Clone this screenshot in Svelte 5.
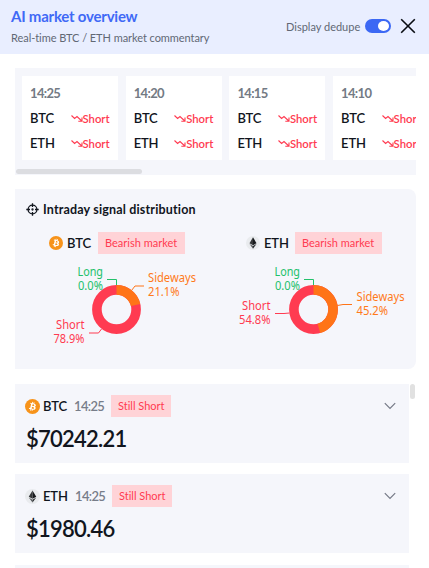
<script>
  const times = ['14:25', '14:20', '14:15', '14:10'];
  const coins = ['BTC', 'ETH'];
  const charts = [
    {
      coin: 'BTC', cx: 101.5, side: 21.1,
      lines: { long: '92,18.5 101.5,18.5 101.5,24', side: '116.5,29.5 120,25 129,25', short: '74,72 83.5,72 86.5,68' },
      labels: [
        { t: 'Long', v: '0.0%', x: 88, y: 14.5, w: 25.5, vw: 25, a: 'end', c: '#23c16b' },
        { t: 'Sideways', v: '21.1%', x: 133, y: 21, w: 48, vw: 31.5, a: 'start', c: '#ff7a1a' },
        { t: 'Short', v: '78.9%', x: 69.5, y: 67.5, w: 28.5, vw: 31, a: 'end', c: '#ff3b51' }
      ]
    },
    {
      coin: 'ETH', cx: 298.5, side: 45.2,
      lines: { long: '289,18.5 298.5,18.5 298.5,24', side: '322.5,44.5 328,43.5 337,43.5', short: '260,52.5 269,52.5 274.5,52' },
      labels: [
        { t: 'Long', v: '0.0%', x: 285, y: 14.5, w: 25.5, vw: 25, a: 'end', c: '#23c16b' },
        { t: 'Sideways', v: '45.2%', x: 341.5, y: 40, w: 48, vw: 31.5, a: 'start', c: '#ff7a1a' },
        { t: 'Short', v: '54.8%', x: 255.5, y: 49, w: 28.5, vw: 31.5, a: 'end', c: '#ff3b51' }
      ]
    }
  ];
  const R = 19.6;
  const C = 2 * Math.PI * R;
</script>

{#snippet coinIcon(name)}
  <svg class="coin" viewBox="0 0 32 32">
    {#if name === 'BTC'}
      <circle cx="16" cy="16" r="16" fill="#f7931a" />
      <path fill="#fff" d="M23.2 14c.3-2.1-1.300-3.200-3.500-4l.7-2.800-1.700-.4-.7 2.700-1.400-.3.700-2.800-1.700-.4-.7 2.800-3.500-.9-.5 1.900 1.300.3c.7.2.8.6.8 1l-1.900 7.600c-.1.200-.3.500-.8.400l-1.300-.3-.9 2 3.500.9-.7 2.800 1.700.4.700-2.800 1.400.4-.7 2.700 1.700.4.700-2.800c2.900.6 5.200.3 6.100-2.300.8-2.100 0-3.400-1.500-4.200 1.100-.2 1.900-1 2.200-2.300zm-3.900 5.500c-.5 2.100-4.100 1-5.200.7l.9-3.800c1.200.3 4.900.9 4.300 3.100zm.5-5.500c-.5 1.900-3.400.9-4.400.7l.9-3.400c1 .2 4 .7 3.500 2.700z" />
    {:else}
      <circle cx="16" cy="16" r="16" fill="#e9ebee" />
      <path fill="#343638" d="M16 3 8 16.300 16 21z" />
      <path fill="#17191c" d="M16 3v18l8-4.700z" />
      <path fill="#55585c" d="M8 18l8 11v-6.300z" />
      <path fill="#25282b" d="M16 22.700V29l8-11z" />
    {/if}
  </svg>
{/snippet}

<main>
  <header>
    <div>
      <h1>AI market overview</h1>
      <p>Real-time BTC / ETH market commentary</p>
    </div>
    <div class="actions">
      <span class="dedupe">Display dedupe</span>
      <span class="switch"><i></i></span>
      <svg class="close" viewBox="0 0 16 16"><path d="M1.200 1.200 14.800 14.800M14.800 1.200 1.200 14.800" /></svg>
    </div>
  </header>

  <section class="strip">
    <div class="row">
      {#each times as time}
        <article>
          <div class="time">{time}</div>
          {#each coins as coin}
            <div class="signal">
              <b class={coin.toLowerCase()}>{coin}</b>
              <span>
                <svg viewBox="0 0 12 10"><path d="M.5 2.500 3.600 5.500 6 3.500 10.800 8M11 4.500V8.300H7.300" /></svg><em>Short</em>
              </span>
            </div>
          {/each}
        </article>
      {/each}
    </div>
    <div class="thumb"></div>
  </section>

  <section class="dist">
    <h2>
      <svg viewBox="0 0 13 13"><circle cx="6.500" cy="6.500" r="4.400" /><path d="M6.500.3v3.700M6.500 9v3.700M.3 6.500H4M9 6.500h3.700" /><circle cx="6.500" cy="6.500" r=".5" /></svg>
      <span>Intraday signal distribution</span>
    </h2>
    <div class="heads">
      {#each coins as coin}
        <div class="head">
          {@render coinIcon(coin)}<b class={coin.toLowerCase()}>{coin}</b><span class="tag market">Bearish market</span>
        </div>
      {/each}
    </div>
    <svg class="plot" viewBox="0 0 401 110">
      {#each charts as c}
        <g fill="none" stroke-width="9.600" transform="rotate(-90 {c.cx} 48.500)">
          <circle cx={c.cx} cy="48.500" r={R} stroke="#ff3b51" />
          <circle cx={c.cx} cy="48.500" r={R} stroke="#ff7417" stroke-dasharray="{C * c.side / 100} {C}" />
        </g>
        <g fill="none" stroke-width="1">
          <polyline points={c.lines.long} stroke="#23c16b" />
          <polyline points={c.lines.side} stroke="#ff7417" />
          <polyline points={c.lines.short} stroke="#ff3b51" />
        </g>
        {#each c.labels as l}
          <text x={l.x} y={l.y} text-anchor={l.a} fill={l.c} textLength={l.w} lengthAdjust="spacingAndGlyphs">{l.t}</text>
          <text x={l.x} y={l.y + 14} text-anchor={l.a} fill={l.c} textLength={l.vw} lengthAdjust="spacingAndGlyphs">{l.v}</text>
        {/each}
      {/each}
    </svg>
  </section>

  <section class="list">
    <div class="cards">
      {#each [['BTC', '$70242.21'], ['ETH', '$1980.46']] as [coin, price]}
        <article>
          <div class="top">
            {@render coinIcon(coin)}<b class={coin.toLowerCase()}>{coin}</b><span class="at">14:25</span><span class="tag still">Still Short</span>
            <svg class="chev" viewBox="0 0 12 8"><path d="M.8 1.200 6 6.400 11.200 1.200" /></svg>
          </div>
          <div class="price">{price}</div>
        </article>
      {/each}
      <article></article>
    </div>
    <div class="bar"></div>
  </section>
</main>

<style>
  :global(body) { overflow: hidden; background: #fff; }
  * { box-sizing: border-box; margin: 0; padding: 0; }
  main { width: 429px; height: 568px; overflow: hidden; font-family: Lato, sans-serif; font-variant-ligatures: none; color: #11151d; white-space: nowrap; }
  svg { display: block; flex: none; }
  b { font-weight: 600; letter-spacing: -.15px; }
  header { height: 54px; background: #e9eeff; display: flex; justify-content: space-between; padding: 0 13px 0 11px; }
  h1 { font-size: 15px; line-height: 20px; margin-top: 6px; color: #4069f6; font-weight: 700; letter-spacing: -.22px; }
  header p { font-size: 11px; line-height: 16px; margin-top: 4px; color: #616875; letter-spacing: -.06px; }
  .actions { display: flex; align-items: center; height: 52px; }
  .dedupe { font-size: 11px; color: #616875; width: 79px; }
  .switch { width: 26px; height: 14px; border-radius: 7px; background: #3c68f4; padding: 2px 2px 2px 13px; }
  .switch i { display: block; width: 11px; height: 10px; border-radius: 50%; background: #fff; }
  .close { width: 16px; height: 16px; margin-left: 9px; fill: none; stroke: #090c12; stroke-width: 1.600; }

  .strip { margin: 14px 13px 0 15px; height: 107px; background: #f5f6fb; padding: 8px 0 0 7px; overflow: hidden; }
  .row { display: flex; gap: 7.700px; }
  .row article { flex: none; width: 96px; height: 84px; background: #fff; padding: 8px; }
  .time { font-size: 13px; line-height: 19px; font-weight: 700; color: #737a84; letter-spacing: -.65px; }
  .signal { display: flex; justify-content: space-between; height: 25px; align-items: center; font-size: 13px; padding-top: 5px; }
  .signal span { display: flex; align-items: center; color: #ff3b51; }
  .signal svg { width: 12px; height: 10px; fill: none; stroke: currentColor; stroke-width: 1.100; }
  .signal em { font-style: normal; font-size: 11.300px; font-weight: 600; width: 27.500px; }
  .thumb { width: 126px; height: 5px; border-radius: 3px; background: #dcdde1; margin: 9px 0 0 -6px; }

  .dist { margin: 14px 13px 0 15px; height: 180px; background: #f5f6fb; border-radius: 0 8px 8px 0; }
  h2 { display: flex; align-items: center; gap: 4px; height: 43px; padding: 0 0 2px 11px; font-size: 12.500px; font-weight: 700; letter-spacing: .17px; }
  h2 svg { width: 13px; height: 13px; fill: none; stroke: #11151d; stroke-width: 1.300; }
  .heads { display: flex; height: 22px; padding-left: 34px; }
  .head { display: flex; align-items: center; width: 197px; flex: none; font-size: 13px; }
  .head + .head { width: 170px; }
  .coin { width: 14px; height: 14px; margin-right: 4px; }
  .tag { background: #ffd3d7; color: #ff3b51; height: 22px; line-height: 22px; font-size: 11px; padding-left: 7px; }
  .head .btc { width: 31px; }
  .head .eth { width: 31px; }
  .market { width: 87px; }
  .plot { width: 401px; height: 110px; margin-top: 7px; font-family: "Noto Sans", sans-serif; font-size: 12px; }

  .list { display: flex; margin: 15px 0 0 15px; height: 184px; overflow: hidden; }
  .cards { width: 394px; display: flex; flex-direction: column; gap: 11.300px; }
  .cards article { flex: none; height: 79px; background: #f5f6fb; padding: 11px 11px 0 10px; }
  .top { display: flex; align-items: center; height: 22px; font-size: 13px; }
  .top .coin { width: 15px; height: 15px; margin-right: 3px; }
  .top .btc { width: 31px; }
  .top .eth { width: 32px; }
  .at { color: #777d89; width: 37px; font-weight: 600; letter-spacing: -.65px; }
  .top .eth + .at { width: 37px; }
  .still { width: 60px; }
  .chev { width: 12px; height: 8px; margin: 0 2px 0 auto; fill: none; stroke: #747985; stroke-width: 1.200; }
  .price { font-size: 22px; line-height: 28px; margin: 8px 0 0 1px; font-weight: 600; letter-spacing: -.75px; }
  .bar { width: 5px; height: 15px; border-radius: 3px; background: #e1e1e1; margin-left: 1px; }
</style>
